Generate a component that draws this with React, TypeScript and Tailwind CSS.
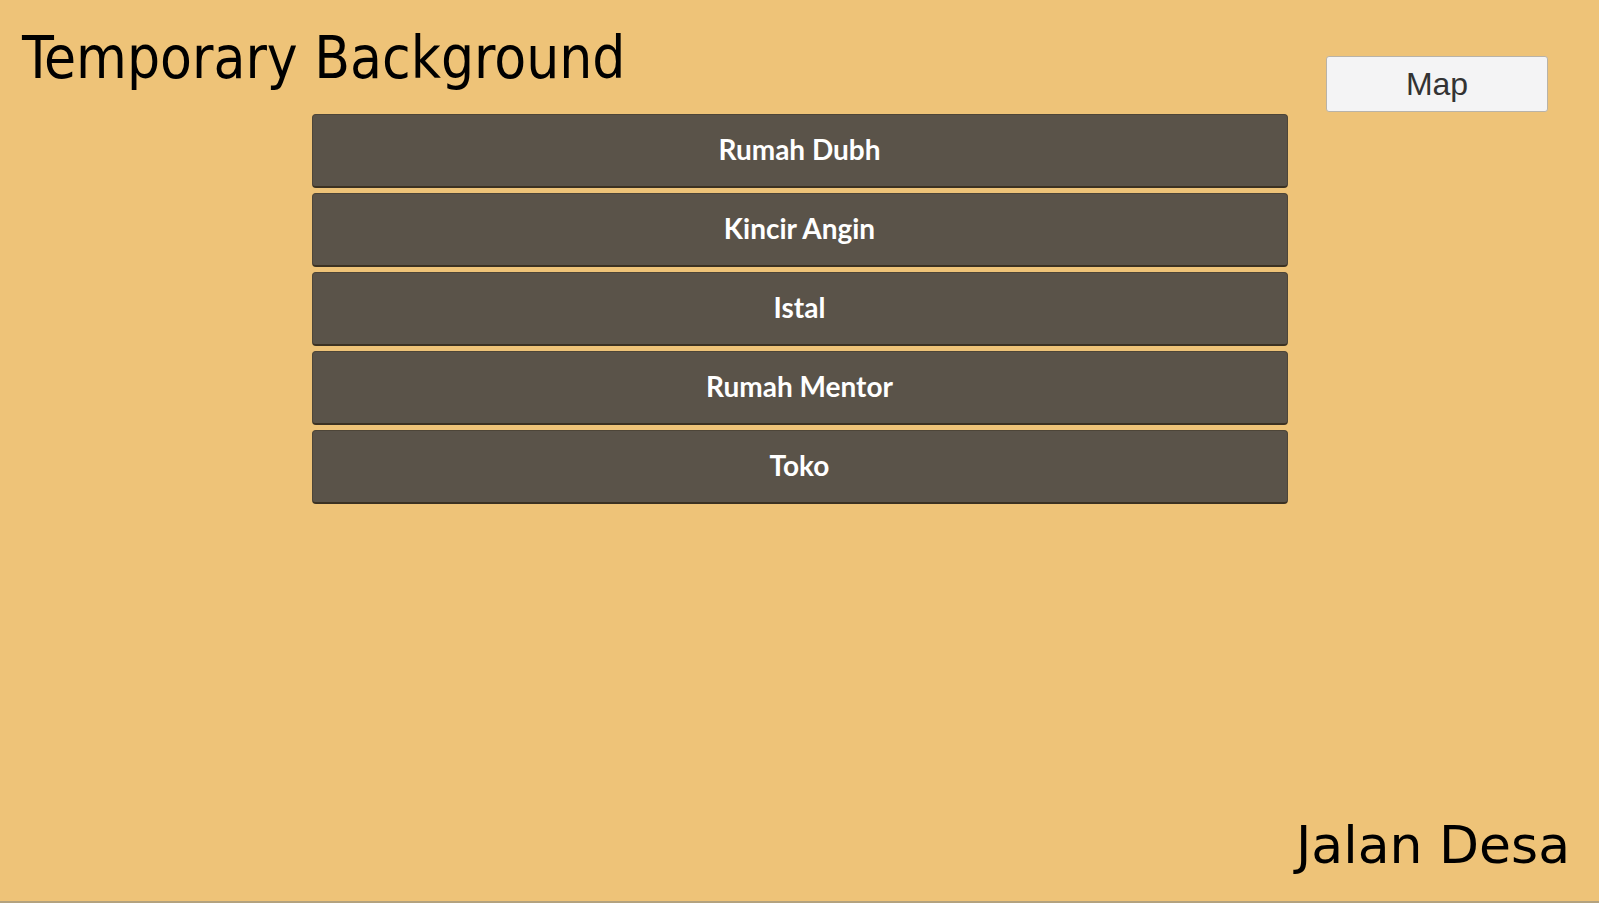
const places = ["Rumah Dubh", "Kincir Angin", "Istal", "Rumah Mentor", "Toko"];

export default function App() {
  return (
    <div className="h-screen w-full bg-[#eec378] flex flex-col overflow-hidden">
      {/* header */}
      <div className="h-[114px] flex items-start justify-between shrink-0">
        <h1 className="pl-[22px] pt-[29px] text-[58px] leading-none text-black font-['DejaVu_Sans_Condensed','DejaVu_Sans',sans-serif]">
          Temporary Background
        </h1>
        <button className="mt-[56px] mr-[51px] w-[222px] h-[56px] bg-[#f4f4f5] border border-[#b9b3a8] rounded-[3px] text-[32px] leading-none text-[#333] font-['Liberation_Sans',Arial,sans-serif]">
          Map
        </button>
      </div>

      {/* location list */}
      <div className="w-[976px] mx-auto flex flex-col gap-[5px]">
        {places.map((p) => (
          <button
            key={p}
            className="h-[74px] w-full pb-[4px] bg-[#5a5349] rounded-[4px] border border-[#4d4538] border-b-2 border-b-[#3b3122] text-white text-[28px] font-bold font-['Lato',sans-serif] flex items-center justify-center"
          >
            {p}
          </button>
        ))}
      </div>

      {/* current location */}
      <div className="mt-auto flex justify-end pr-[29px] pb-[30px]">
        <span className="text-[52px] leading-none text-black font-['DejaVu_Sans',sans-serif]">
          Jalan Desa
        </span>
      </div>
      <div className="h-[2px] bg-[#b3a27f] shrink-0" />
    </div>
  );
}
